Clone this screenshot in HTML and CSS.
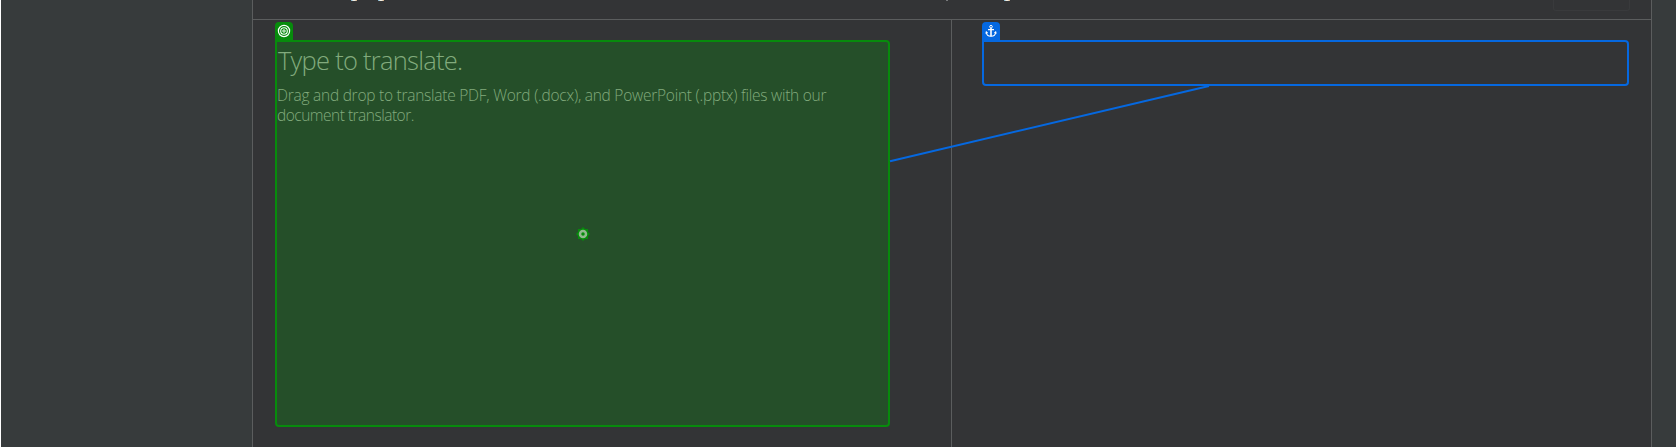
FILE: index.html
```html
<!DOCTYPE html>
<html lang="en">
<head>
<meta charset="utf-8">
<title>Translator</title>
<link rel="stylesheet" href="styles.css">
</head>
<body>
<main class="translator">
  <header class="toolbar">
    <i class="tail tail-a"></i><i class="tail tail-b"></i><i class="tail tail-comma"></i><i class="tail tail-c"></i>
    <div class="toolbar-button"></div>
  </header>
  <div class="panes">
    <section class="pane source">
      <div class="frame target-frame">
        <span class="tag"><svg width="14" height="14" viewBox="0 0 14 14" fill="none" stroke="#fff"><circle cx="7" cy="7" r="5.6" stroke-width="1.2"/><circle cx="7" cy="7" r="3.3" stroke-width="1.1"/><circle cx="7" cy="7" r="1.2" stroke-width="1"/></svg></span>
        <h1 class="title"><span>Type to translate.</span></h1>
        <p class="hint"><span class="line line-one">Drag and drop to translate PDF, Word (.docx), and PowerPoint (.pptx) files with our</span><span class="line line-two">document translator.</span></p>
        <svg class="marker" width="14" height="14" viewBox="0 0 14 14"><path d="M7 0 9 2 12 2 12 5 14 7 12 9 12 12 9 12 7 14 5 12 2 12 2 9 0 7 2 5 2 2 5 2Z" fill="#078b0c"/><circle cx="7" cy="7" r="3" fill="none" stroke="#93b890" stroke-width="2.5"/></svg>
      </div>
    </section>
    <section class="pane result">
      <div class="frame anchor-frame">
        <span class="tag"><svg width="14" height="14" viewBox="0 0 14 14" fill="none" stroke="#fff"><circle cx="7" cy="2.7" r="1.3" stroke-width="1"/><path d="M7 4v8.3" stroke-width="1.6"/><path d="M4 5.6h6M2.3 8.2c.2 2.4 2 4.1 4.7 4.1s4.5-1.7 4.7-4.1M1.8 9.6l.5-1.6 1.3 1M12.2 9.6 11.7 8l-1.3 1" stroke-width="1.1"/></svg></span>
      </div>
    </section>
  </div>
  <svg class="connector" width="1676" height="447"><path d="M890 161.3 1209 86" stroke="#0568e0" stroke-width="2"/></svg>
</main>
</body>
</html>
```
FILE: styles.css
```css
* { box-sizing: border-box; }
body { margin: 0; height: 447px; overflow: hidden; background: #373b3c; border-left: 1px solid #fff; font-family: "Segoe UI", "Open Sans", "Noto Sans", sans-serif; }
.translator { width: 1400px; height: 447px; margin-left: 251px; display: flex; flex-direction: column; background: #333436; border: solid #5b5d5e; border-width: 0 1px; }
.toolbar { position: relative; height: 20px; flex: none; display: flex; justify-content: flex-end; padding-right: 21px; border-bottom: 1px solid #5b5d5e; }
.toolbar-button { width: 77px; height: 11px; border: 1px solid #393a3c; border-top: 0; border-radius: 0 0 3px 3px; }
.tail { position: absolute; top: 0; width: 6px; height: 1px; background: linear-gradient(90deg, #5aa0c8, #f0eee4 35%, #f0eee4 65%, #c89a6a); }
.tail-a { left: 98px; }
.tail-b { left: 125px; }
.tail-c { left: 751px; }
.tail-comma { left: 693px; width: 2px; background: #77797b; }
.panes { flex: 1; display: grid; grid-template-columns: 699px 1fr; }
.pane { padding-top: 20px; }
.source { padding-left: 22px; border-right: 1px solid #5b5d5e; }
.result { padding-left: 30px; }
.frame { position: relative; border: 2px solid; border-radius: 0 4px 4px 4px; }
.target-frame { width: 615px; height: 387px; border-color: #078b0c; background: #254f29; color: #82ab7d; }
.anchor-frame { width: 647px; height: 46px; border-color: #0568e0; }
.tag { position: absolute; left: -2px; top: -20px; width: 18px; height: 20px; border-radius: 4px 4px 0 0; padding: 2px; }
.tag svg { display: block; }
.target-frame .tag { background: #078b0c; }
.anchor-frame .tag { background: #0568e0; }
.title { margin: 0; padding-left: 1px; font-size: 25.5px; line-height: 36px; font-weight: 300; letter-spacing: -0.75px; white-space: nowrap; }
.hint { margin: 7px 0 0; font-size: 15.5px; line-height: 20px; font-weight: 300; }
.line { display: block; width: max-content; white-space: nowrap; }
.line-one { letter-spacing: -0.25px; }
.line-two { letter-spacing: -0.5px; }
.marker { position: absolute; left: 299px; top: 185px; }
.connector { position: absolute; left: 0; top: 0; pointer-events: none; }
```
